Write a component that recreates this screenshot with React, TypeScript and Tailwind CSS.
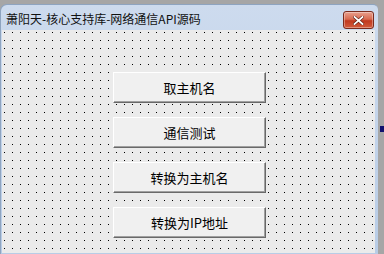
const BUTTONS = ["取主机名", "通信测试", "转换为主机名", "转换为IP地址"];

function CloseButton() {
  return (
    <div className="mt-[3px] flex h-[18px] w-[31px] items-center justify-center rounded-[3px] border border-[#7a2a1c] bg-[linear-gradient(#e8a08e_0%,#d86a50_45%,#c0391f_55%,#d25a3c_100%)] shadow-[inset_0_0_0_1px_rgba(255,255,255,0.35)]">
      <svg width="11" height="9" viewBox="0 0 11 9">
        <path d="M1.5 1 L9.5 8 M9.5 1 L1.5 8" stroke="#5a1a10" strokeWidth="3" strokeLinecap="square" />
        <path d="M1.5 1 L9.5 8 M9.5 1 L1.5 8" stroke="#ffffff" strokeWidth="1.8" strokeLinecap="square" />
      </svg>
    </div>
  );
}

function FormButton({ label }: { label: string }) {
  return (
    <button className="flex h-[31px] w-[153px] items-center justify-center border border-t-white border-l-white border-r-[#696969] border-b-[#696969] bg-[#f0f0f0] text-[13px] text-black shadow-[inset_-1px_-1px_0_#a0a0a0]">
      {label}
    </button>
  );
}

export default function App() {
  return (
    <div
      className="flex h-[254px] w-[384px] flex-col bg-[#a6a6a6] pt-[4px]"
      style={{ fontFamily: '"Noto Sans CJK SC", "Noto Sans", sans-serif' }}
    >
      <div className="flex flex-1">
        <div className="flex w-[378px] flex-col rounded-tl-[7px] rounded-tr-[5px] border-t border-l border-[#8ea4c0] bg-[linear-gradient(#cddbee,#b8cce6)] pb-[1px]">
          <div className="flex h-[25px] items-center justify-between pl-[5px] pr-[4px] pt-[2px]">
            <span className="text-[12px] leading-none text-[#111]">萧阳天-核心支持库-网络通信API源码</span>
            <CloseButton />
          </div>
          <div className="ml-[1px] mr-[3px] flex flex-1 flex-col items-center gap-[14px] bg-[#ebebeb] bg-[linear-gradient(90deg,transparent_1px,#ebebeb_1px),linear-gradient(transparent_1px,#ebebeb_1px),linear-gradient(#000,#000)] bg-size-[8px_8px] bg-position-[2px_2px] pt-[42px] pl-[2px]">
            {BUTTONS.map((b) => (
              <FormButton key={b} label={b} />
            ))}
          </div>
        </div>
        <div className="flex flex-1 flex-col pt-[122px]">
          <div className="ml-auto h-[6px] w-[4px] bg-[#10106e]" />
        </div>
      </div>
    </div>
  );
}
